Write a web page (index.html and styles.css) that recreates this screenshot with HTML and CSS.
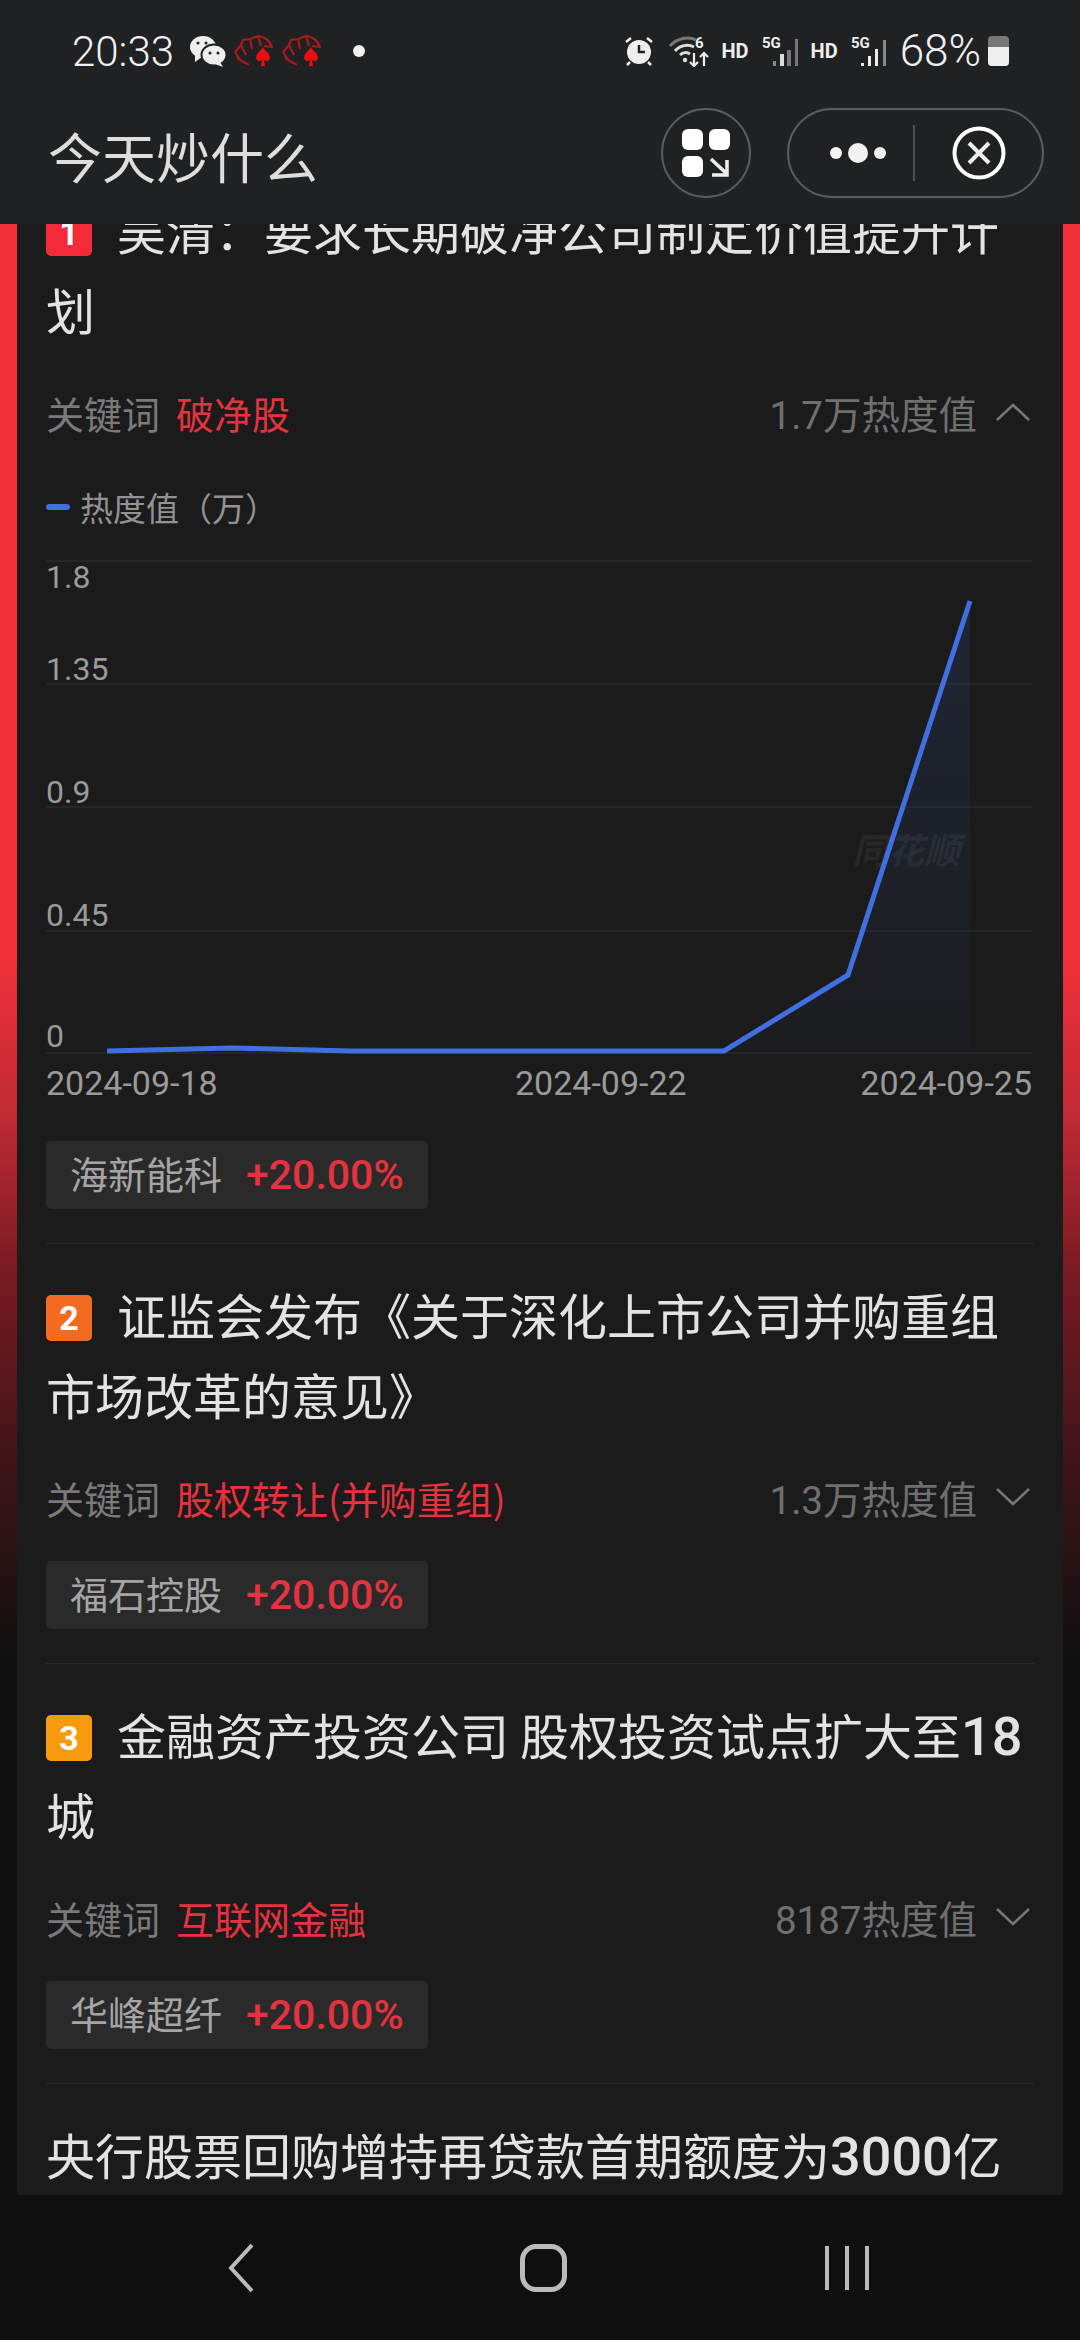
FILE: index.html
```html
<!DOCTYPE html>
<html lang="zh-CN">
<head>
  <meta charset="UTF-8" />
  <meta name="viewport" content="width=device-width, initial-scale=1.0"/>
  <title>今天炒什么</title>
  <link rel="stylesheet" href="styles.css">
</head>
<body>

  <header class="top">
    <!-- Status bar -->
    <div class="status">
      <div class="status-left">
        <span class="clock">20:33</span>
        <svg class="ic-wechat" viewBox="0 0 36 32">
          <ellipse cx="13" cy="12" rx="13" ry="11" fill="#eee"/>
          <path d="M5 19 L5 27 L12 22 Z" fill="#eee"/>
          <ellipse cx="24" cy="20" rx="12.5" ry="10.5" fill="#eee" stroke="#1f2122" stroke-width="2"/>
          <path d="M30 27 L33 32 L25 29 Z" fill="#eee"/>
          <circle cx="8" cy="8" r="1.5" fill="#1f2122"/>
          <circle cx="16" cy="8" r="1.5" fill="#1f2122"/>
          <circle cx="20" cy="18" r="1.5" fill="#1f2122"/>
          <circle cx="28" cy="18" r="1.5" fill="#1f2122"/>
        </svg>
        <svg class="ic-cards" viewBox="0 0 39 32">
          <g fill="none" stroke="#a81a1c" stroke-width="2.2" stroke-linejoin="round">
            <path d="M7 26 L1 17 L7 10 L12 20"/>
            <path d="M7 10 L9 5 L16 4 L18 14"/>
            <path d="M16 4 L24 1 L27 11"/>
            <path d="M24 1 C31 2 36 6 38 12 L30 11"/>
            <path d="M3 23 L15 30"/>
          </g>
          <path d="M29 12 C31 16 36 18 36 23 C36 26 32 27 30 25 L31 31 L27 31 L28 25 C26 27 22 26 22 23 C22 18 27 16 29 12 Z" fill="#e80f10"/>
        </svg>
        <svg class="ic-cards" viewBox="0 0 39 32">
          <g fill="none" stroke="#a81a1c" stroke-width="2.2" stroke-linejoin="round">
            <path d="M7 26 L1 17 L7 10 L12 20"/>
            <path d="M7 10 L9 5 L16 4 L18 14"/>
            <path d="M16 4 L24 1 L27 11"/>
            <path d="M24 1 C31 2 36 6 38 12 L30 11"/>
            <path d="M3 23 L15 30"/>
          </g>
          <path d="M29 12 C31 16 36 18 36 23 C36 26 32 27 30 25 L31 31 L27 31 L28 25 C26 27 22 26 22 23 C22 18 27 16 29 12 Z" fill="#e80f10"/>
        </svg>
        <span class="dot"></span>
      </div>
      <div class="status-right">
        <svg class="ic-alarm" viewBox="0 0 30 30">
          <circle cx="15" cy="16" r="12" fill="#eee"/>
          <path d="M15 9 V16 H21" fill="none" stroke="#1f2122" stroke-width="2.5"/>
          <path d="M2 6 L7 2 M28 6 L23 2 M6 26 L3 29 M24 26 L27 29" stroke="#eee" stroke-width="2.5"/>
        </svg>
        <svg class="ic-wifi" viewBox="0 0 42 32">
          <path d="M1 11 C8 3 20 1 27 5" fill="none" stroke="#777" stroke-width="3"/>
          <path d="M6 16 C11 10 19 9 25 12" fill="none" stroke="#ddd" stroke-width="3"/>
          <path d="M11 20 C14 17 18 17 21 19" fill="none" stroke="#ddd" stroke-width="3"/>
          <circle cx="16" cy="25" r="2.2" fill="#ddd"/>
          <text x="26" y="13" class="ic-text" font-size="15">6</text>
          <path d="M25 18 V31 M21 27 L25 31 L29 27 M35 31 V18 M31 22 L35 18 L39 22" fill="none" stroke="#eee" stroke-width="2.2"/>
        </svg>
        <span class="hd">HD</span>
        <svg class="ic-signal" viewBox="0 0 38 32">
          <text x="0" y="13" class="ic-text" font-size="15">5G</text>
          <rect x="11" y="26" width="3" height="5" fill="#888"/>
          <rect x="18" y="19" width="4" height="12" fill="#ddd"/>
          <rect x="25" y="15" width="4" height="16" fill="#777"/>
          <rect x="33" y="4" width="3" height="27" fill="#777"/>
        </svg>
        <span class="hd">HD</span>
        <svg class="ic-signal" viewBox="0 0 38 32">
          <text x="0" y="13" class="ic-text" font-size="15">5G</text>
          <rect x="10" y="28" width="3" height="3" fill="#eee"/>
          <rect x="17" y="21" width="3" height="10" fill="#eee"/>
          <rect x="24" y="14" width="3" height="17" fill="#eee"/>
          <rect x="32" y="5" width="3" height="26" fill="#888"/>
        </svg>
        <span class="percent">68%</span>
        <span class="battery"><span class="battery-fill"></span></span>
      </div>
    </div>

    <!-- Mini program bar -->
    <div class="nav">
      <h1 class="nav-title">今天炒什么</h1>
      <div class="nav-btns">
        <div class="round-btn">
          <svg viewBox="0 0 48 48" class="ic-grid">
            <rect x="0" y="0" width="21" height="21" rx="6" fill="#fff"/>
            <rect x="27" y="0" width="21" height="21" rx="6" fill="#fff"/>
            <rect x="0" y="27" width="21" height="21" rx="6" fill="#fff"/>
            <path d="M29 30 L45 45 M45 31 V46 H30" fill="none" stroke="#eee" stroke-width="3.6"/>
          </svg>
        </div>
        <div class="capsule">
          <div class="capsule-more">
            <span class="more-dot"></span><span class="more-dot big"></span><span class="more-dot"></span>
          </div>
          <div class="capsule-close">
            <svg viewBox="0 0 54 54" class="ic-close">
              <circle cx="27" cy="27" r="24.5" fill="none" stroke="#fff" stroke-width="4"/>
              <path d="M17 17 L37 37 M37 17 L17 37" stroke="#eee" stroke-width="4"/>
            </svg>
          </div>
        </div>
      </div>
    </div>
  </header>

  <main class="panel">
    <div class="list">

      <section class="item">
        <div class="item-title"><span class="badge b1">1</span>吴清：要求长期破净公司制定价值提升计划</div>
        <div class="meta">
          <div><span class="kw-label">关键词</span><span class="kw">破净股</span></div>
          <div class="heat">1.7万热度值
            <svg class="chev" viewBox="0 0 36 20"><path d="M2 18 L18 3 L34 18" fill="none" stroke="#777" stroke-width="2.5"/></svg>
          </div>
        </div>

        <div class="legend"><span class="legend-mark"></span>热度值（万）</div>
        <svg class="chart" viewBox="46 552 988 550">
          <defs>
            <linearGradient id="area" x1="0" y1="0" x2="0" y2="1">
              <stop offset="0" stop-color="#3d6fe0" stop-opacity="0.12"/>
              <stop offset="1" stop-color="#3d6fe0" stop-opacity="0.02"/>
            </linearGradient>
          </defs>
          <g stroke="#2b2b2c" stroke-width="1.5">
            <line x1="46" x2="1032" y1="561" y2="561"/>
            <line x1="46" x2="1032" y1="684" y2="684"/>
            <line x1="46" x2="1032" y1="807" y2="807"/>
            <line x1="46" x2="1032" y1="931" y2="931"/>
            <line x1="46" x2="1032" y1="1053" y2="1053"/>
          </g>
          <g class="axis">
            <text x="46" y="588">1.8</text>
            <text x="46" y="680">1.35</text>
            <text x="46" y="803">0.9</text>
            <text x="46" y="926">0.45</text>
            <text x="46" y="1047">0</text>
          </g>
          <g class="axis dates">
            <text x="46" y="1095">2024-09-18</text>
            <text x="515" y="1095">2024-09-22</text>
            <text x="1032" y="1095" text-anchor="end">2024-09-25</text>
          </g>
          <text x="852" y="864" class="mark">同花顺</text>
          <polygon points="724,1051 848,975 970,601 970,1051" fill="url(#area)"/>
          <polyline points="107,1051 231,1048 351,1051 724,1051 848,975 970,601" fill="none" stroke="#3f6fe0" stroke-width="5"/>
        </svg>

        <div class="tag"><span class="tag-name">海新能科</span><span class="tag-pct">+20.00%</span></div>
      </section>

      <section class="item">
        <div class="item-title"><span class="badge b2">2</span>证监会发布《关于深化上市公司并购重组市场改革的意见》</div>
        <div class="meta">
          <div><span class="kw-label">关键词</span><span class="kw">股权转让(并购重组)</span></div>
          <div class="heat">1.3万热度值
            <svg class="chev" viewBox="0 0 36 20"><path d="M2 2 L18 17 L34 2" fill="none" stroke="#777" stroke-width="2.5"/></svg>
          </div>
        </div>
        <div class="tag"><span class="tag-name">福石控股</span><span class="tag-pct">+20.00%</span></div>
      </section>

      <section class="item">
        <div class="item-title"><span class="badge b3">3</span>金融资产投资公司 股权投资试点扩大至<span class="num">18</span>城</div>
        <div class="meta">
          <div><span class="kw-label">关键词</span><span class="kw">互联网金融</span></div>
          <div class="heat">8187热度值
            <svg class="chev" viewBox="0 0 36 20"><path d="M2 2 L18 17 L34 2" fill="none" stroke="#777" stroke-width="2.5"/></svg>
          </div>
        </div>
        <div class="tag"><span class="tag-name">华峰超纤</span><span class="tag-pct">+20.00%</span></div>
      </section>

      <section class="item">
        <div class="item-title">央行股票回购增持再贷款首期额度为<span class="num">3000</span>亿</div>
      </section>

    </div>
  </main>

  <!-- Android nav -->
  <footer class="sysnav">
    <svg class="ic-back" viewBox="0 0 28 50"><path d="M25 2 L4 25 L25 48" fill="none" stroke="#bbb" stroke-width="4"/></svg>
    <span class="ic-home"></span>
    <div class="ic-recent"><span></span><span></span><span></span></div>
  </footer>

</body>
</html>
```

FILE: styles.css
```css
* {
  margin: 0;
  padding: 0;
  box-sizing: border-box;
}

body {
  width: 1080px;
  height: 2340px;
  overflow: hidden;
  display: flex;
  flex-direction: column;
  font-family: Roboto, "Noto Sans CJK SC", sans-serif;
  color: #e3e3e3;
  background: linear-gradient(180deg, #f2303a 0, #f2303a 950px, #c32a35 1110px, #7a1a22 1270px, #3a1418 1480px, #0f0f0f 1660px);
}

.top {
  height: 224px;
  flex-shrink: 0;
  background: #1f2122;
}

.status {
  height: 102px;
  padding: 0 71px 0 72px;
  display: flex;
  align-items: center;
  justify-content: space-between;
}

.status-left,
.status-right {
  display: flex;
  align-items: center;
}

.clock {
  font-size: 42px;
  font-weight: 300;
  color: #f0f0f0;
  margin-right: 16px;
}

.ic-wechat {
  width: 36px;
  height: 32px;
  margin-right: 8px;
}

.ic-cards {
  width: 39px;
  height: 32px;
  margin-right: 9px;
}

.dot {
  width: 12px;
  height: 12px;
  border-radius: 50%;
  background: #f0f0f0;
  margin-left: 23px;
}

.ic-alarm {
  width: 30px;
  height: 30px;
  margin-right: 15px;
}

.ic-wifi {
  width: 42px;
  height: 32px;
  margin-right: 10px;
}

.ic-text {
  font-family: Roboto, sans-serif;
  font-weight: 700;
  fill: #eee;
}

.hd {
  font-size: 20px;
  font-weight: 700;
  color: #eee;
  margin-right: 13px;
}

.ic-signal {
  width: 38px;
  height: 32px;
  margin-right: 11px;
}

.percent {
  font-size: 44px;
  font-weight: 300;
  color: #f0f0f0;
  margin-right: 7px;
}

.battery {
  width: 21px;
  height: 30px;
  border-radius: 4px;
  background: #777;
  overflow: hidden;
  display: flex;
  align-items: flex-end;
}

.battery-fill {
  width: 100%;
  height: 19px;
  background: #eee;
}

.nav {
  height: 102px;
  padding: 0 36px 0 48px;
  display: flex;
  align-items: center;
  justify-content: space-between;
}

.nav-title {
  font-size: 54px;
  font-weight: 400;
  color: #dedede;
  font-family: "Noto Sans CJK SC", sans-serif;
  padding-top: 4px;
}

.nav-btns {
  display: flex;
  align-items: center;
  gap: 36px;
}

.round-btn {
  width: 90px;
  height: 90px;
  border: 2px solid #5a5b5c;
  border-radius: 50%;
  display: flex;
  align-items: center;
  justify-content: center;
}

.ic-grid {
  width: 48px;
  height: 48px;
}

.capsule {
  width: 257px;
  height: 90px;
  border: 2px solid #5a5b5c;
  border-radius: 45px;
  display: flex;
  align-items: center;
}

.capsule-more {
  width: 126px;
  height: 56px;
  border-right: 2px solid #4c4d4e;
  display: flex;
  align-items: center;
  justify-content: center;
  gap: 6px;
  padding-left: 14px;
}

.more-dot {
  width: 12px;
  height: 12px;
  border-radius: 50%;
  background: #f2f2f2;
}

.more-dot.big {
  width: 20px;
  height: 20px;
}

.capsule-close {
  flex: 1;
  display: flex;
  justify-content: center;
}

.ic-close {
  width: 54px;
  height: 54px;
}

.panel {
  flex: 1;
  margin: 0 17px;
  padding: 0 29px;
  background: #1b1b1c;
  overflow: hidden;
}

/* first item is scrolled partly under the header */
.list {
  margin-top: -35px;
}

.item {
  padding: 30px 0 34px;
  border-bottom: 1px solid #2a2a2b;
}

.item:first-child {
  padding-top: 0;
}

.item-title {
  font-family: "Noto Sans CJK SC", sans-serif;
  font-size: 49px;
  line-height: 80px;
  color: #e3e3e3;
}

.num {
  font-family: Roboto, sans-serif;
  font-weight: 500;
  font-size: 54px;
  line-height: 1;
}

.badge {
  display: inline-block;
  width: 46px;
  height: 46px;
  line-height: 46px;
  margin-right: 25px;
  border-radius: 5px;
  font-family: Roboto, sans-serif;
  font-size: 34px;
  font-weight: 700;
  text-align: center;
  color: #fff;
  vertical-align: 5px;
}

.b1 { background: #f32a3a; }
.b2 { background: #f26b21; }
.b3 { background: #f79a0e; }

.meta {
  margin-top: 38px;
  height: 50px;
  display: flex;
  align-items: center;
  justify-content: space-between;
  font-family: "Noto Sans CJK SC", sans-serif;
  font-size: 38px;
}

.kw-label {
  color: #7a7a7a;
  margin-right: 16px;
}

.kw {
  color: #e5323f;
}

.heat {
  display: flex;
  align-items: center;
  gap: 18px;
  font-size: 38.5px;
  color: #6f6f6f;
  font-family: Roboto, "Noto Sans CJK SC", sans-serif;
}

.chev {
  width: 36px;
  height: 20px;
  margin-right: 3px;
}

.legend {
  margin-top: 48px;
  height: 44px;
  display: flex;
  align-items: center;
  gap: 10px;
  font-family: "Noto Sans CJK SC", sans-serif;
  font-size: 33px;
  color: #929292;
}

.legend-mark {
  width: 24px;
  height: 6px;
  border-radius: 3px;
  background: #3f6fe0;
}

.chart {
  display: block;
  width: 988px;
  height: 550px;
  margin-top: 23px;
}

.axis {
  font-family: Roboto, sans-serif;
  font-size: 32px;
  fill: #9a9a9a;
}

.dates {
  font-size: 34px;
}

.mark {
  font-family: "Noto Sans CJK SC", sans-serif;
  font-size: 36px;
  font-style: italic;
  font-weight: 700;
  fill: #282829;
}

.tag {
  margin-top: 39px;
  width: 382px;
  height: 68px;
  padding-left: 24px;
  border-radius: 5px;
  background: #2a2a2b;
  display: flex;
  align-items: center;
  gap: 24px;
  font-size: 38px;
}

.tag-name {
  font-family: "Noto Sans CJK SC", sans-serif;
  color: #a5a5a5;
  margin-bottom: 6px;
}

.tag-pct {
  font-size: 41px;
  font-weight: 500;
  color: #e5323f;
}

.sysnav {
  height: 145px;
  flex-shrink: 0;
  background: #0f0f0f;
  display: flex;
  align-items: center;
  padding: 0 0 0 227px;
}

.ic-back {
  width: 28px;
  height: 50px;
  margin-right: 265px;
}

.ic-home {
  width: 47px;
  height: 48px;
  border: 5px solid #bbb;
  border-radius: 16px;
  margin-right: 258px;
}

.ic-recent {
  display: flex;
  gap: 16px;
}

.ic-recent span {
  width: 4px;
  height: 44px;
  background: #bbb;
}
```
